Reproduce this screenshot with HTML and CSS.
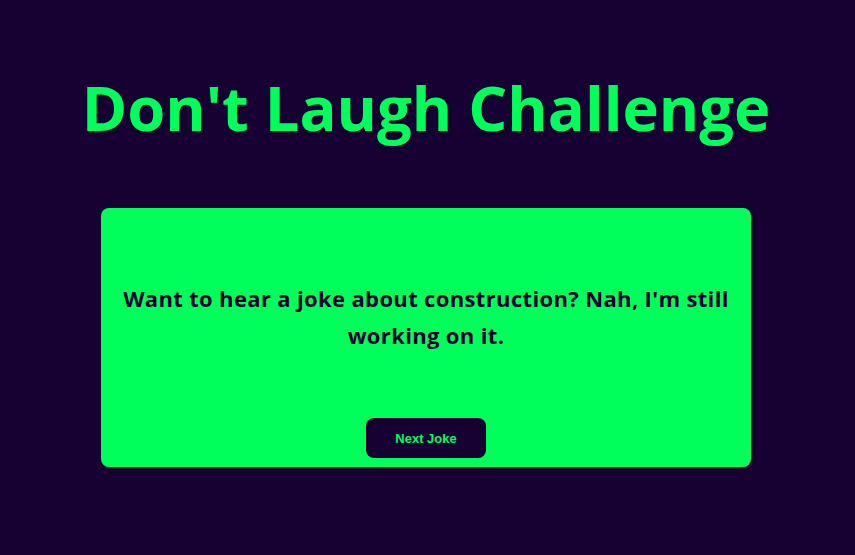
FILE: index.html
```html
<!DOCTYPE html>
<html lang="en">
<head>
<meta charset="utf-8">
<title>Don't Laugh Challenge</title>
<link rel="stylesheet" href="styles.css">
</head>
<body>
<main class="page">
  <h1 class="title">Don't Laugh Challenge</h1>
  <section class="card">
    <div class="joke-area">
      <p class="joke">Want to hear a joke about construction? Nah, I'm still working on it.</p>
    </div>
    <button class="next-btn" type="button">Next Joke</button>
  </section>
</main>
</body>
</html>
```

FILE: styles.css
```css
html, body {
  margin: 0;
  padding: 0;
  background: #170032;
  height: 100%;
}
.page {
  display: flex;
  flex-direction: column;
  align-items: center;
  padding-top: 68px;
  padding-right: 3px;
  font-family: "Open Sans", Lato, sans-serif;
}
.title {
  margin: 0;
  color: #00ff5b;
  font-size: 61.5px;
  font-weight: 700;
  line-height: 78px;
}
.card {
  margin-top: 62px;
  width: 650px;
  height: 259px;
  box-sizing: border-box;
  background: #00ff5b;
  border-radius: 8px;
  display: flex;
  flex-direction: column;
  align-items: center;
  padding: 0 20px 9px;
}
.joke-area {
  flex: 1;
  display: flex;
  align-items: center;
  justify-content: center;
  padding-top: 8px;
}
.joke {
  margin: 0;
  color: #170032;
  font-size: 22px;
  font-weight: 700;
  letter-spacing: 0.35px;
  line-height: 37px;
  text-align: center;
}
.next-btn {
  width: 120px;
  height: 40px;
  border: none;
  border-radius: 8px;
  background: #170032;
  color: #00ff5b;
  font-family: "Liberation Sans", Arial, sans-serif;
  font-size: 13px;
  font-weight: 700;
  cursor: pointer;
}
```
